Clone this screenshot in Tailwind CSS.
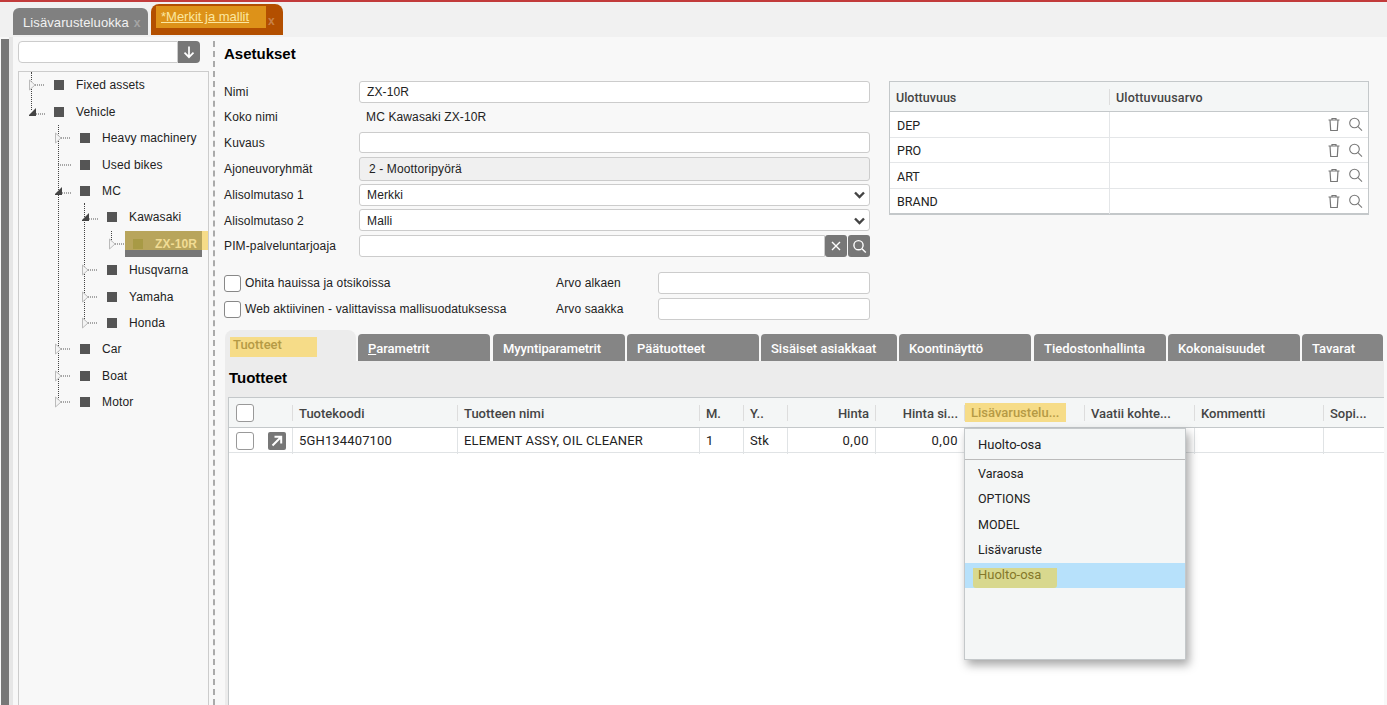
<!DOCTYPE html>
<html lang="en">
<head>
<meta charset="UTF-8">
<title>Merkit ja mallit</title>
<script src="https://cdn.jsdelivr.net/npm/@tailwindcss/browser@4"></script>
</head>
<body class="bg-[#f8f8f8] font-['Roboto',sans-serif] text-[12.5px] text-[#222] h-[705px] w-[1387px] overflow-hidden">
<!-- top tabs -->
<div class="h-[37px] bg-[#f1f1f1] border-t-2 border-[#c23b3b] flex items-end pl-[13px] gap-[3px]">
  <div class="w-[135px] h-[27px] mb-[2px] pt-[2px] bg-[#808080] rounded-t-[6px] flex items-center pl-[10px] text-white/90 text-[13px] tracking-[0.1px] font-['Liberation_Sans',sans-serif]">Lisävarusteluokka<span class="ml-[5px] text-white/30 font-bold text-[12px]">x</span></div>
  <div class="w-[132px] h-[31px] mb-[2px] bg-[#b34f00] rounded-t-[8px] flex items-start pl-[5px] pt-[2px] font-['Liberation_Sans',sans-serif]">
    <span class="w-[110px] h-[22px] bg-[#dd9219] pl-[5px] leading-[22px] text-[#fbe7a0] text-[13px] underline">*Merkit ja mallit</span>
    <span class="ml-[2px] mt-[6px] text-white/30 font-bold text-[12px]">x</span>
  </div>
</div>

<div class="flex h-[668px]">
  <!-- left strip + tree -->
  <div class="w-[9px] pl-[1px] pt-[2px] bg-[#f8f8f8] shrink-0"><div class="w-[8px] h-full bg-[#777]"></div></div>
  <div class="w-[4px] bg-[#e6e6e6] shrink-0"></div>
  <aside class="w-[200px] shrink-0 pl-[5px] pt-[4px] font-['Liberation_Sans',sans-serif] tracking-[0.13px] text-[12px]">
    <div class="flex w-[182px] h-[22px]">
      <div class="w-[160px] bg-white border border-[#ccc] rounded-l-[4px]"></div>
      <div class="w-[22px] bg-[#777] rounded-r-[4px] flex items-center justify-center">
        <svg width="14" height="14" viewBox="0 0 14 14" fill="none" stroke="#fff" stroke-width="1.7"><path d="M7 1.5v10.5M2.5 7.7 7 12.2l4.5-4.5"/></svg>
      </div>
    </div>
    <div class="relative mt-[8px] w-[191px] h-[640px] border border-[#ccc] border-b-0">
      <div class="absolute left-[12px] top-0 h-[38px] border-l border-dotted border-[#444]"></div>
      <div class="absolute left-[39px] top-[53px] h-[277px] border-l border-dotted border-[#444]"></div>
      <div class="absolute left-[65px] top-[131px] h-[120px] border-l border-dotted border-[#444]"></div>
      <div class="absolute left-[92px] top-[159px] h-[13px] border-l border-dotted border-[#444]"></div>
      <ul class="relative">
        <li class="flex items-center h-[26px] pl-[10px]"><svg class="w-[16px] h-[12px]" viewBox="0 0 16 12"><path d="M.5 1 6 6 .5 11z" fill="#f4f4f4" stroke="#bbb"/><path d="M6 6h10" stroke="#555" stroke-dasharray="1 1"/></svg><span class="w-[10px] h-[10px] bg-[#555] ml-[9px] mr-[12px]"></span>Fixed assets</li>
        <li class="flex items-center h-[27px] pl-[10px]"><svg class="w-[16px] h-[12px]" viewBox="0 0 16 12"><path d="M-1 10 7 2v8z" fill="#444"/><path d="M7 8h9" stroke="#555" stroke-dasharray="1 1"/></svg><span class="w-[10px] h-[10px] bg-[#555] ml-[9px] mr-[12px]"></span>Vehicle</li>
        <li class="flex items-center h-[26px] pl-[36px]"><svg class="w-[16px] h-[12px]" viewBox="0 0 16 12"><path d="M.5 1 6 6 .5 11z" fill="#f4f4f4" stroke="#bbb"/><path d="M6 6h10" stroke="#555" stroke-dasharray="1 1"/></svg><span class="w-[10px] h-[10px] bg-[#555] ml-[9px] mr-[12px]"></span>Heavy machinery</li>
        <li class="flex items-center h-[27px] pl-[36px]"><svg class="w-[16px] h-[12px]" viewBox="0 0 16 12"><path d="M3 6h13" stroke="#555" stroke-dasharray="1 1"/></svg><span class="w-[10px] h-[10px] bg-[#555] ml-[9px] mr-[12px]"></span>Used bikes</li>
        <li class="flex items-center h-[26px] pl-[36px]"><svg class="w-[16px] h-[12px]" viewBox="0 0 16 12"><path d="M-1 10 7 2v8z" fill="#444"/><path d="M7 8h9" stroke="#555" stroke-dasharray="1 1"/></svg><span class="w-[10px] h-[10px] bg-[#555] ml-[9px] mr-[12px]"></span>MC</li>
        <li class="flex items-center h-[26px] pl-[63px]"><svg class="w-[16px] h-[12px]" viewBox="0 0 16 12"><path d="M-1 10 7 2v8z" fill="#444"/><path d="M7 8h9" stroke="#555" stroke-dasharray="1 1"/></svg><span class="w-[10px] h-[10px] bg-[#555] ml-[9px] mr-[12px]"></span>Kawasaki</li>
        <li class="relative flex items-center h-[27px] pl-[90px]">
          <svg class="w-[16px] h-[12px]" viewBox="0 0 16 12"><path d="M.5 1 6 6 .5 11z" fill="#f4f4f4" stroke="#bbb"/><path d="M6 6h10" stroke="#555" stroke-dasharray="1 1"/></svg>
          <div class="absolute left-[106px] top-[1px] w-[77px] h-[26px] bg-[#777]"></div>
          <div class="absolute left-[106px] top-[1px] w-[77px] h-[19px] bg-[#b8a55c]"></div>
          <div class="absolute left-[183px] top-[1px] w-[6px] h-[19px] bg-[#f6dc88]"></div>
          <span class="relative w-[10px] h-[10px] bg-[#a89a45] ml-[8px] mr-[12px]"></span><span class="relative text-[#f1dc94] font-bold">ZX-10R</span>
        </li>
        <li class="flex items-center h-[26px] pl-[63px]"><svg class="w-[16px] h-[12px]" viewBox="0 0 16 12"><path d="M.5 1 6 6 .5 11z" fill="#f4f4f4" stroke="#bbb"/><path d="M6 6h10" stroke="#555" stroke-dasharray="1 1"/></svg><span class="w-[10px] h-[10px] bg-[#555] ml-[9px] mr-[12px]"></span>Husqvarna</li>
        <li class="flex items-center h-[27px] pl-[63px]"><svg class="w-[16px] h-[12px]" viewBox="0 0 16 12"><path d="M.5 1 6 6 .5 11z" fill="#f4f4f4" stroke="#bbb"/><path d="M6 6h10" stroke="#555" stroke-dasharray="1 1"/></svg><span class="w-[10px] h-[10px] bg-[#555] ml-[9px] mr-[12px]"></span>Yamaha</li>
        <li class="flex items-center h-[26px] pl-[63px]"><svg class="w-[16px] h-[12px]" viewBox="0 0 16 12"><path d="M.5 1 6 6 .5 11z" fill="#f4f4f4" stroke="#bbb"/><path d="M6 6h10" stroke="#555" stroke-dasharray="1 1"/></svg><span class="w-[10px] h-[10px] bg-[#555] ml-[9px] mr-[12px]"></span>Honda</li>
        <li class="flex items-center h-[26px] pl-[36px]"><svg class="w-[16px] h-[12px]" viewBox="0 0 16 12"><path d="M.5 1 6 6 .5 11z" fill="#f4f4f4" stroke="#bbb"/><path d="M6 6h10" stroke="#555" stroke-dasharray="1 1"/></svg><span class="w-[10px] h-[10px] bg-[#555] ml-[9px] mr-[12px]"></span>Car</li>
        <li class="flex items-center h-[27px] pl-[36px]"><svg class="w-[16px] h-[12px]" viewBox="0 0 16 12"><path d="M.5 1 6 6 .5 11z" fill="#f4f4f4" stroke="#bbb"/><path d="M6 6h10" stroke="#555" stroke-dasharray="1 1"/></svg><span class="w-[10px] h-[10px] bg-[#555] ml-[9px] mr-[12px]"></span>Boat</li>
        <li class="flex items-center h-[26px] pl-[36px]"><svg class="w-[16px] h-[12px]" viewBox="0 0 16 12"><path d="M.5 1 6 6 .5 11z" fill="#f4f4f4" stroke="#bbb"/><path d="M6 6h10" stroke="#555" stroke-dasharray="1 1"/></svg><span class="w-[10px] h-[10px] bg-[#555] ml-[9px] mr-[12px]"></span>Motor</li>
      </ul>
    </div>
  </aside>
  <div class="w-0 h-[664px] mt-[4px] border-l-2 border-dashed border-[#aaa] shrink-0"></div>

  <!-- main -->
  <main class="pl-[9px] w-[1172px] shrink-0">
    <h1 class="h-[44px] pt-[7px] text-[15px] leading-[20px] font-bold text-black font-['Liberation_Sans',sans-serif]">Asetukset</h1>
    <div class="flex h-[249px] gap-[19px] font-['Liberation_Sans',sans-serif] text-[12px] tracking-[0.13px]">
      <div class="w-[646px]">
        <div class="grid grid-cols-[135px_1fr] items-center h-[21px]"><span>Nimi</span><div class="h-full bg-white border border-[#ccc] rounded-[3px] pl-[7px] leading-[20px]">ZX-10R</div></div>
        <div class="grid grid-cols-[135px_1fr] items-center h-[21px] mt-[4px]"><span>Koko nimi</span><span class="pl-[7px]">MC Kawasaki ZX-10R</span></div>
        <div class="grid grid-cols-[135px_1fr] items-center h-[21px] mt-[5px]"><span>Kuvaus</span><div class="h-full bg-white border border-[#ccc] rounded-[3px]"></div></div>
        <div class="grid grid-cols-[135px_1fr] items-center h-[23px] mt-[4px]"><span>Ajoneuvoryhmät</span><div class="h-full bg-[#f0f0f0] border border-[#ccc] rounded-[3px] pl-[9px] leading-[22px]">2 - Moottoripyörä</div></div>
        <div class="grid grid-cols-[135px_1fr] items-center h-[22px] mt-[4px]"><span>Alisolmutaso 1</span><div class="h-full flex items-center justify-between bg-white border border-[#ccc] rounded-[3px] pl-[7px] pr-[4px]">Merkki<svg width="11" height="8" viewBox="0 0 11 8" fill="none" stroke="#444" stroke-width="2.4"><path d="m1 1.5 4.5 4.5L10 1.5"/></svg></div></div>
        <div class="grid grid-cols-[135px_1fr] items-center h-[22px] mt-[3px]"><span class="pt-[1px]">Alisolmutaso 2</span><div class="h-full flex items-center justify-between bg-white border border-[#ccc] rounded-[3px] pl-[7px] pr-[4px] pt-[1px]">Malli<svg width="11" height="8" viewBox="0 0 11 8" fill="none" stroke="#444" stroke-width="2.4"><path d="m1 1.5 4.5 4.5L10 1.5"/></svg></div></div>
        <div class="grid grid-cols-[135px_1fr] items-center h-[22px] mt-[4px]"><span>PIM-palveluntarjoaja</span>
          <div class="flex h-full">
            <div class="flex-1 bg-white border border-[#ccc] rounded-l-[3px]"></div>
            <div class="w-[22px] bg-[#777] rounded-[3px] flex items-center justify-center"><svg width="10" height="10" viewBox="0 0 10 10" stroke="#fff" stroke-width="1.4"><path d="m1 1 8 8M9 1 1 9"/></svg></div>
            <div class="w-[22px] ml-[1px] bg-[#777] rounded-[3px] flex items-center justify-center"><svg width="15" height="15" viewBox="0 0 15 15" fill="none" stroke="#fff" stroke-width="1.4"><circle cx="6.5" cy="6.2" r="4.6"/><path d="m10 9.8 3.8 3.8"/></svg></div>
          </div>
        </div>
        <div class="grid grid-cols-[332px_102px_1fr] items-center h-[22px] mt-[15px]">
          <label class="flex items-center"><span class="w-[17px] h-[17px] bg-white border border-[#888] rounded-[3px] mr-[4px]"></span>Ohita hauissa ja otsikoissa</label>
          <span>Arvo alkaen</span><div class="h-full bg-white border border-[#ccc] rounded-[3px]"></div>
        </div>
        <div class="grid grid-cols-[332px_102px_1fr] items-center h-[22px] mt-[4px]">
          <label class="flex items-center"><span class="w-[17px] h-[17px] bg-white border border-[#888] rounded-[3px] mr-[4px]"></span>Web aktiivinen - valittavissa mallisuodatuksessa</label>
          <span>Arvo saakka</span><div class="h-full bg-white border border-[#ccc] rounded-[3px]"></div>
        </div>
      </div>
      <!-- dimensions -->
      <div class="w-[480px] h-[134px] border border-[#c4c8ca] border-b-2 bg-white font-['Roboto',sans-serif] text-[12.5px] tracking-normal">
        <div class="grid grid-cols-[219px_1fr] h-[30px] bg-[#f4f6f6] border-b border-[#c4c8ca] items-center text-[#444] font-medium">
          <span class="pl-[6px] leading-[18px] h-[16px]">Ulottuvuus</span><span class="pl-[6px] border-l border-[#ddd] leading-[18px] h-[16px] tracking-[0.15px]">Ulottuvuusarvo</span>
        </div>
        <div class="grid grid-cols-[219px_1fr] h-[25.5px] border-b border-[#e4e6e8] items-center"><span class="pl-[7px] pt-[5px]">DEP</span><div class="h-full border-l border-[#e4e6e8] flex items-center justify-end gap-[7px] pr-[5px] pt-[1px]"><svg width="14" height="15" viewBox="0 0 14 15" fill="none" stroke="#777" stroke-width="1.2"><path d="M1.5 3h11M5 3V1.5h4V3M3 3l.7 10.5h6.6L11 3"/></svg><svg width="15" height="15" viewBox="0 0 15 15" fill="none" stroke="#777" stroke-width="1.1"><circle cx="6.5" cy="6" r="4.8"/><path d="m10 9.6 4 4"/></svg></div></div>
        <div class="grid grid-cols-[219px_1fr] h-[25.5px] border-b border-[#e4e6e8] items-center"><span class="pl-[7px] pt-[3px]">PRO</span><div class="h-full border-l border-[#e4e6e8] flex items-center justify-end gap-[7px] pr-[5px] pt-[1px]"><svg width="14" height="15" viewBox="0 0 14 15" fill="none" stroke="#777" stroke-width="1.2"><path d="M1.5 3h11M5 3V1.5h4V3M3 3l.7 10.5h6.6L11 3"/></svg><svg width="15" height="15" viewBox="0 0 15 15" fill="none" stroke="#777" stroke-width="1.1"><circle cx="6.5" cy="6" r="4.8"/><path d="m10 9.6 4 4"/></svg></div></div>
        <div class="grid grid-cols-[219px_1fr] h-[25.5px] border-b border-[#e4e6e8] items-center"><span class="pl-[7px] pt-[5px]">ART</span><div class="h-full border-l border-[#e4e6e8] flex items-center justify-end gap-[7px] pr-[5px] pt-[1px]"><svg width="14" height="15" viewBox="0 0 14 15" fill="none" stroke="#777" stroke-width="1.2"><path d="M1.5 3h11M5 3V1.5h4V3M3 3l.7 10.5h6.6L11 3"/></svg><svg width="15" height="15" viewBox="0 0 15 15" fill="none" stroke="#777" stroke-width="1.1"><circle cx="6.5" cy="6" r="4.8"/><path d="m10 9.6 4 4"/></svg></div></div>
        <div class="grid grid-cols-[219px_1fr] h-[25.5px] items-center"><span class="pl-[7px] pt-[3px]">BRAND</span><div class="h-full border-l border-[#e4e6e8] flex items-center justify-end gap-[7px] pr-[5px] pt-[1px]"><svg width="14" height="15" viewBox="0 0 14 15" fill="none" stroke="#777" stroke-width="1.2"><path d="M1.5 3h11M5 3V1.5h4V3M3 3l.7 10.5h6.6L11 3"/></svg><svg width="15" height="15" viewBox="0 0 15 15" fill="none" stroke="#777" stroke-width="1.1"><circle cx="6.5" cy="6" r="4.8"/><path d="m10 9.6 4 4"/></svg></div></div>
      </div>
    </div>

    <!-- tabs -->
    <div class="flex items-end h-[31px] ml-[1px] text-white font-medium text-[13px]">
      <div class="w-[131px] h-[31px] bg-[#ececec] rounded-t-[8px] pl-[5px] pt-[7px] mr-[2px]"><span class="block w-[87px] h-[20px] bg-[#f6dc88] pl-[3px] leading-[16px] text-[#b59a45]">Tuotteet</span></div>
      <div class="w-[132px] h-[27px] bg-[#858585] rounded-t-[4px] pl-[10px] leading-[29px] mr-[3px]"><span class="underline">P</span>arametrit</div>
      <div class="w-[132px] h-[27px] bg-[#858585] rounded-t-[4px] pl-[10px] leading-[29px] mr-[2px] tracking-[-0.1px]">Myyntiparametrit</div>
      <div class="w-[132px] h-[27px] bg-[#858585] rounded-t-[4px] pl-[10px] leading-[29px] mr-[2px]">Päätuotteet</div>
      <div class="w-[136px] h-[27px] bg-[#858585] rounded-t-[4px] pl-[10px] leading-[29px] mr-[2px]">Sisäiset asiakkaat</div>
      <div class="w-[132px] h-[27px] bg-[#858585] rounded-t-[4px] pl-[10px] leading-[29px] mr-[3px]">Koontinäyttö</div>
      <div class="w-[132px] h-[27px] bg-[#858585] rounded-t-[4px] pl-[10px] leading-[29px] mr-[2px]">Tiedostonhallinta</div>
      <div class="w-[132px] h-[27px] bg-[#858585] rounded-t-[4px] pl-[10px] leading-[29px] mr-[2px]">Kokonaisuudet</div>
      <div class="w-[81px] h-[27px] bg-[#858585] rounded-t-[4px] pl-[10px] leading-[29px]">Tavarat</div>
    </div>

    <!-- products panel -->
    <section class="ml-[1px] w-[1159px] h-[344px] bg-[#ececec] pl-[3px]">
      <h2 class="h-[36px] pl-[1px] pt-[7px] text-[15px] leading-[20px] font-bold text-black font-['Liberation_Sans',sans-serif]">Tuotteet</h2>
      <div class="relative w-[1156px] h-[310px] bg-white border border-[#c4c8ca] border-r-0 text-[13px]">
        <div class="grid grid-cols-[63px_165px_242px_44px_44px_88px_89px_120px_110px_129px_1fr] h-[30px] bg-[#f4f6f6] border-b border-[#c4c8ca] items-center text-[#444] font-medium">
          <div class="pl-[7px]"><span class="block w-[18px] h-[18px] bg-white border border-[#999] rounded-[3px]"></span></div>
          <span class="pl-[6px] border-l border-[#ddd] h-[16px] leading-[18px]">Tuotekoodi</span>
          <span class="pl-[6px] border-l border-[#ddd] h-[16px] leading-[18px]">Tuotteen nimi</span>
          <span class="pl-[6px] border-l border-[#ddd] h-[16px] leading-[18px]">M.</span>
          <span class="pl-[6px] border-l border-[#ddd] h-[16px] leading-[18px]">Y..</span>
          <span class="pr-[6px] border-l border-[#ddd] h-[16px] leading-[18px] text-right">Hinta</span>
          <span class="pr-[6px] border-l border-[#ddd] h-[16px] leading-[18px] text-right">Hinta si...</span>
          <div class="border-l border-[#ddd] h-[16px] relative"><span class="absolute left-0 -top-[2px] w-[101px] h-[19px] bg-[#f6dc88] pl-[6px] leading-[20px] text-[#b59a45] whitespace-nowrap">Lisävarustelu...</span></div>
          <span class="pl-[6px] border-l border-[#ddd] h-[16px] leading-[18px]">Vaatii kohte...</span>
          <span class="pl-[6px] border-l border-[#ddd] h-[16px] leading-[18px]">Kommentti</span>
          <span class="pl-[6px] border-l border-[#ddd] h-[16px] leading-[18px]">Sopi...</span>
        </div>
        <div class="grid grid-cols-[63px_165px_242px_44px_44px_88px_89px_120px_110px_129px_1fr] h-[25px] border-b border-[#e0e3e5] items-center tracking-[0.15px]">
          <div class="flex items-center pl-[7px] h-full"><span class="w-[18px] h-[18px] bg-white border border-[#999] rounded-[3px]"></span><span class="ml-[14px] w-[18px] h-[18px] bg-[#777] rounded-[2px] flex items-center justify-center"><svg width="12" height="12" viewBox="0 0 12 12" fill="none" stroke="#fff" stroke-width="2"><path d="M1.5 10.5 10 2M3.5 1.8h6.7v6.7"/></svg></span></div>
          <span class="pl-[6px] border-l border-[#e0e3e5] h-full leading-[26px]">5GH134407100</span>
          <span class="pl-[6px] border-l border-[#e0e3e5] h-full leading-[26px]">ELEMENT ASSY, OIL CLEANER</span>
          <span class="pl-[6px] border-l border-[#e0e3e5] h-full leading-[26px]">1</span>
          <span class="pl-[6px] border-l border-[#e0e3e5] h-full leading-[26px]">Stk</span>
          <span class="pr-[6px] border-l border-[#e0e3e5] h-full leading-[26px] text-right tracking-[0.5px]">0,00</span>
          <span class="pr-[6px] border-l border-[#e0e3e5] h-full leading-[26px] text-right tracking-[0.5px]">0,00</span>
          <span class="border-l border-[#e0e3e5] h-full"></span>
          <span class="border-l border-[#e0e3e5] h-full"></span>
          <span class="border-l border-[#e0e3e5] h-full"></span>
          <span class="border-l border-[#e0e3e5] h-full"></span>
        </div>
        <!-- open dropdown -->
        <div class="absolute left-[735px] top-[30px] w-[222px] h-[232px] bg-[#f4f6f6] border border-[#c4c8ca] shadow-[3px_5px_9px_rgba(0,0,0,0.35)] text-[12.5px]">
          <div class="h-[31px] border-b border-[#bbb] pl-[13px] leading-[32px] text-[13px]">Huolto-osa</div>
          <div class="pl-[13px] h-[25.4px] leading-[25px] mt-[1px]">Varaosa</div>
          <div class="pl-[13px] h-[25.4px] leading-[25px]">OPTIONS</div>
          <div class="pl-[13px] h-[25.4px] leading-[25px]">MODEL</div>
          <div class="pl-[13px] h-[25.4px] leading-[25px]">Lisävaruste</div>
          <div class="pl-[8px] h-[25.4px] bg-[#b7e1fb] flex items-end"><span class="w-[84px] h-[20px] pl-[5px] bg-[#d8d88e] leading-[14px] text-[#85782a] text-[13px] rounded-b-[3px]">Huolto-osa</span></div>
        </div>
      </div>
    </section>
  </main>
</div>
</body>
</html>
